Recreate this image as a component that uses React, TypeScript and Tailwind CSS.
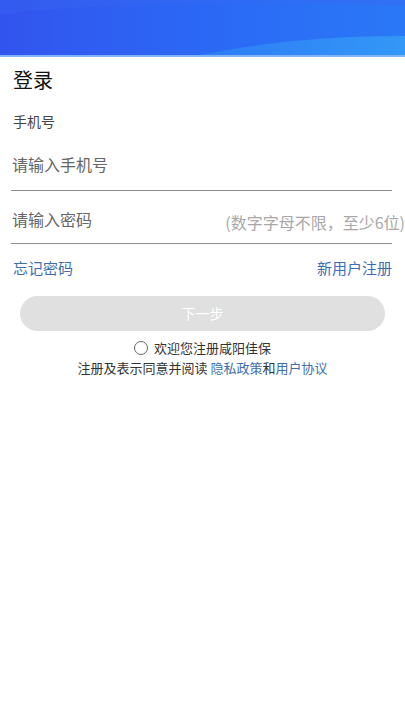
export default function App() {
  return (
    <div className="min-h-[720px] w-full bg-white" style={{ fontFamily: '"Noto Sans CJK SC", "Noto Sans", sans-serif' }}>
      <div className="relative h-[57px] w-full overflow-hidden bg-gradient-to-r from-[#3254ee] via-[#2b68f5] to-[#2a78f7]">
        <svg className="absolute inset-0 h-full w-full" viewBox="0 0 405 57" preserveAspectRatio="none">
          <defs>
            <linearGradient id="wave" x1="0" y1="0" x2="1" y2="0">
              <stop offset="0" stopColor="#2d7af5" />
              <stop offset="1" stopColor="#3398f7" />
            </linearGradient>
          </defs>
          <path d="M0 14 C120 2 260 0 405 6 L405 0 L0 0 Z" fill="#3a68f2" opacity="0.35" />
          <path d="M190 57 C260 42 330 36 405 36 L405 57 Z" fill="url(#wave)" />
        </svg>
        <div className="absolute bottom-0 left-0 h-[2px] w-full bg-[#7fb3f5]" />
      </div>

      <div className="px-[13px] pt-[9px]">
        <div className="text-[20px] leading-[28px] text-[#111]">登录</div>
        <div className="mt-[17px] text-[14px] leading-[20px] text-[#444]">手机号</div>
      </div>

      <div className="ml-[11px] mr-[13px] mt-[22px] flex h-[38px] items-start border-b border-[#8e8e8e] pl-[1px]">
        <span className="text-[16px] leading-[22px] text-[#666]">请输入手机号</span>
      </div>

      <div className="ml-[11px] mr-[13px] mt-[17px] flex h-[36px] items-start justify-between border-b border-[#8e8e8e] pl-[1px]">
        <span className="text-[16px] leading-[22px] text-[#666]">请输入密码</span>
        <span className="-mr-[13px] mt-[3px] whitespace-nowrap text-[16px] leading-[22px] text-[#a8a8a8]">(数字字母不限，至少6位)</span>
      </div>

      <div className="mx-[13px] mt-[13px] flex items-center justify-between text-[15px] leading-[22px] text-[#3b6fae]">
        <span>忘记密码</span>
        <span>新用户注册</span>
      </div>

      <div className="mx-[20px] mt-[17px] flex h-[35px] items-center justify-center rounded-full bg-[#e0e0e0] text-[14px] text-white">
        下一步
      </div>

      <div className="mt-[7px] flex items-center justify-center gap-[6px] text-[13px] leading-[20px] text-[#333]">
        <span className="h-[14px] w-[14px] rounded-full border border-[#666]" />
        <span>欢迎您注册咸阳佳保</span>
      </div>
      <div className="flex justify-center text-[13px] leading-[20px] text-[#333]">
        <span>注册及表示同意并阅读&nbsp;</span>
        <span className="text-[#3b6fae]">隐私政策</span>
        <span>和</span>
        <span className="text-[#3b6fae]">用户协议</span>
      </div>
    </div>
  );
}
